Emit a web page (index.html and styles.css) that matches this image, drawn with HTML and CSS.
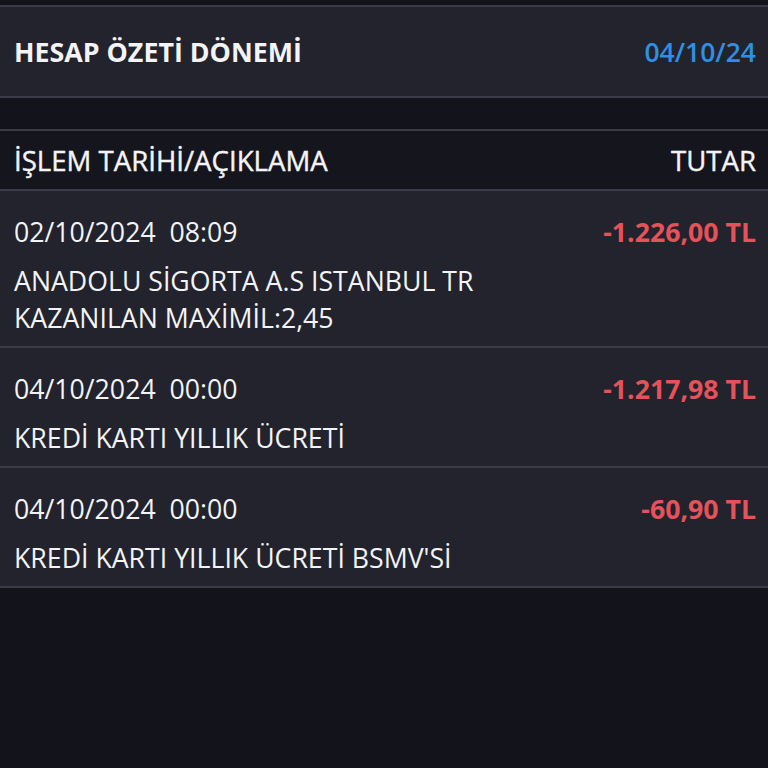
FILE: index.html
```html
<!DOCTYPE html>
<html lang="tr">
<head>
	<meta charset="UTF-8">
	<title>Hesap Özeti</title>
	<link rel="stylesheet" href="styles.css">
</head>
<body>
	<div class="page">
		<div class="period">
			<span class="period_title">HESAP ÖZETİ DÖNEMİ</span>
			<span class="period_date">04/10/24</span>
		</div>
		<div class="spacer"></div>
		<div class="list_head">
			<span>İŞLEM TARİHİ/AÇIKLAMA</span>
			<span>TUTAR</span>
		</div>
		<ul class="list">
			<li>
				<div class="row_top">
					<span class="date">02/10/2024&nbsp;&nbsp;08:09</span>
					<span class="amount">-1.226,00 TL</span>
				</div>
				<p class="desc">ANADOLU SİGORTA A.S ISTANBUL TR<br>KAZANILAN MAXİMİL:2,45</p>
			</li>
			<li>
				<div class="row_top">
					<span class="date">04/10/2024&nbsp;&nbsp;00:00</span>
					<span class="amount">-1.217,98 TL</span>
				</div>
				<p class="desc">KREDİ KARTI YILLIK ÜCRETİ</p>
			</li>
			<li>
				<div class="row_top">
					<span class="date">04/10/2024&nbsp;&nbsp;00:00</span>
					<span class="amount">-60,90 TL</span>
				</div>
				<p class="desc">KREDİ KARTI YILLIK ÜCRETİ BSMV'Sİ</p>
			</li>
		</ul>
	</div>
</body>
</html>
```

FILE: styles.css
```css
*{
	margin:0;
	padding:0;
	list-style:none;
	box-sizing:border-box;
}
html,body{
	background:#13131b;
}
body{
	font-family:"Open Sans","Noto Sans",sans-serif;
	color:#f4f4f6;
	font-size:26.7px;
}
.page{
	padding-top:5px;
}
.period{
	display:flex;
	justify-content:space-between;
	align-items:center;
	height:93px;
	padding:0 12px 0 14px;
	background:#22232d;
	border-top:2px solid #3a3b46;
	border-bottom:2px solid #3a3b46;
}
.period_title{
	font-weight:700;
	font-size:26.8px;
}
.period_date{
	color:#2f90e3;
	font-weight:600;
	font-size:26.5px;
}
.spacer{
	height:31px;
}
.list_head{
	display:flex;
	justify-content:space-between;
	align-items:center;
	height:62px;
	padding:0 12px 0 14px;
	background:#15151d;
	border-top:2px solid #3a3b46;
	border-bottom:2px solid #3a3b46;
	font-size:27.6px;
	-webkit-text-stroke:0.4px #f4f4f6;
}
.list li{
	padding:22px 12px 10px 14px;
	background:#22232d;
	border-bottom:2px solid #3a3b46;
}
.row_top{
	display:flex;
	justify-content:space-between;
	line-height:37px;
}
.amount{
	color:#e5525a;
	font-weight:700;
}
.desc{
	margin-top:12px;
	line-height:37px;
}
```
